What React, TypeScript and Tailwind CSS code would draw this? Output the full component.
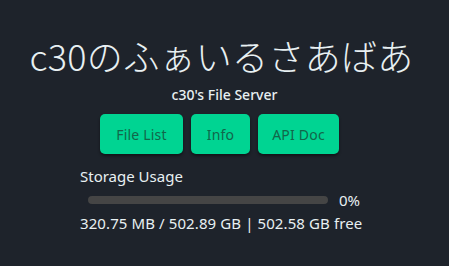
import React from "react";

const buttons = [
  { label: "File List", w: "w-[83px]" },
  { label: "Info", w: "w-[59px]" },
  { label: "API Doc", w: "w-[81px]" },
];

export default function App() {
  return (
    <div className="w-[449px] h-[266px] bg-[#1e232b] flex flex-col items-center text-[#e8f0f2] [font-family:'Noto_Sans','Noto_Sans_CJK_JP',sans-serif]">
      <h1 className="mt-[32px] mr-[6px] text-[36px] leading-[46px] font-light tracking-[0.3px] [font-family:'Noto_Sans_CJK_JP',sans-serif]">
        c30のふぁいるさあばあ
      </h1>
      <div className="mt-[7px] text-[14px] leading-[20px] font-medium">c30's File Server</div>
      <div className="mt-[9px] mr-[10px] flex gap-[8px]">
        {buttons.map((b) => (
          <button
            key={b.label}
            className={`${b.w} h-[40px] rounded-[5px] bg-[#00d492] text-[#12664a] text-[14px] tracking-[0.2px] shadow-[0_2px_3px_rgba(0,0,0,0.45)]`}
          >
            {b.label}
          </button>
        ))}
      </div>
      <div className="mt-[11px] mr-[9px] w-[280px] flex flex-col">
        <div className="text-[15px] leading-[22px]">Storage Usage</div>
        <div className="mt-[3px] flex items-center pl-[8px]">
          <div className="w-[240px] h-[8px] rounded-full bg-[#454545]" />
          <span className="ml-auto text-[15px] leading-[20px]">0%</span>
        </div>
        <div className="mt-[3px] text-[15px] leading-[20px] tracking-[0.1px] whitespace-nowrap">
          320.75 MB / 502.89 GB | 502.58 GB free
        </div>
      </div>
    </div>
  );
}
